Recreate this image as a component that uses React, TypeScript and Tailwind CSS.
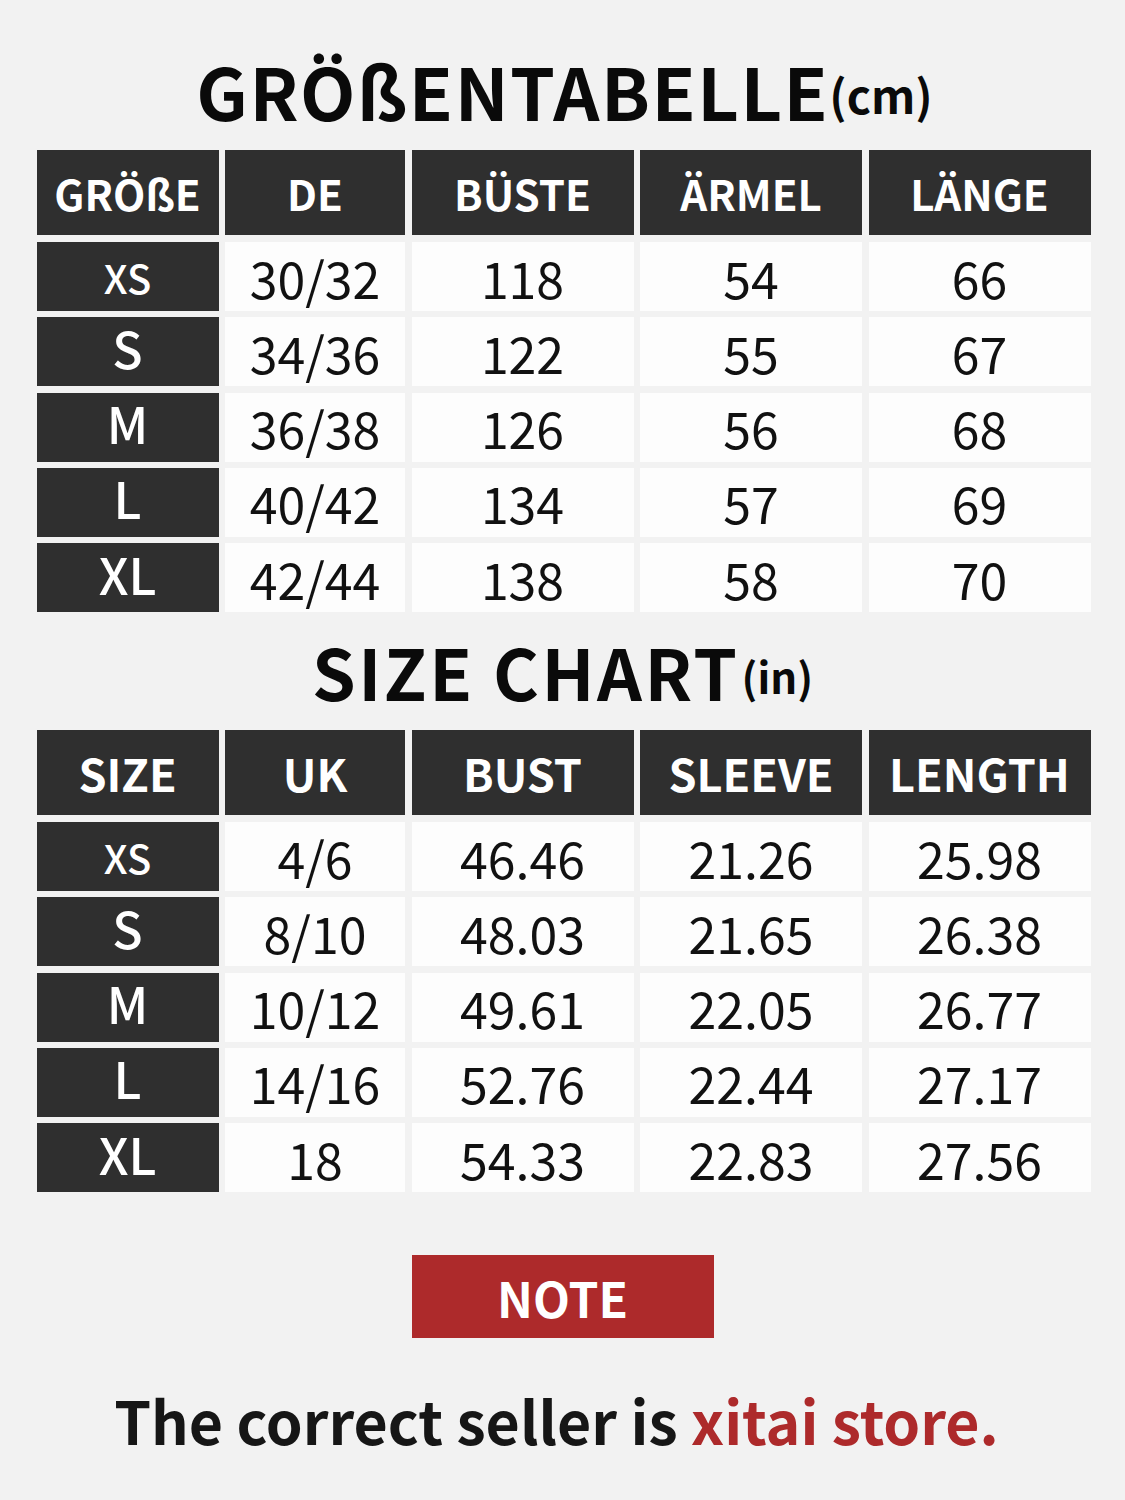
const font = { fontFamily: '"Noto Sans CJK SC", "Noto Sans", sans-serif' }

type Row = { size: string; cells: string[] }

const cmRows: Row[] = [
  { size: "XS", cells: ["30/32", "118", "54", "66"] },
  { size: "S", cells: ["34/36", "122", "55", "67"] },
  { size: "M", cells: ["36/38", "126", "56", "68"] },
  { size: "L", cells: ["40/42", "134", "57", "69"] },
  { size: "XL", cells: ["42/44", "138", "58", "70"] },
]

const inRows: Row[] = [
  { size: "XS", cells: ["4/6", "46.46", "21.26", "25.98"] },
  { size: "S", cells: ["8/10", "48.03", "21.65", "26.38"] },
  { size: "M", cells: ["10/12", "49.61", "22.05", "26.77"] },
  { size: "L", cells: ["14/16", "52.76", "22.44", "27.17"] },
  { size: "XL", cells: ["18", "54.33", "22.83", "27.56"] },
]

function SizeTable({ headers, rows, big }: { headers: string[]; rows: Row[]; big?: boolean }) {
  return (
    <div className="grid w-[1052px] grid-cols-[182px_180px_222px_222px_222px] gap-x-[6.5px] gap-y-[6.25px]">
      {headers.map((h) => (
        <div
          key={h}
          className={`mb-[0.75px] flex h-[85px] items-center justify-center bg-[#2f2f2f] font-bold text-white ${
            big ? "text-[45px]" : "text-[42px]"
          }`}
        >
          {h}
        </div>
      ))}
      {rows.map((r) => (
        <Cells key={r.size} row={r} />
      ))}
    </div>
  )
}

function Cells({ row }: { row: Row }) {
  const small = row.size === "XS"
  return (
    <>
      <div
        className={`flex h-[69px] items-center justify-center bg-[#2f2f2f] font-medium text-white ${
          small ? "text-[40px]" : "pb-[10px] text-[50px]"
        }`}
      >
        {row.size}
      </div>
      {row.cells.map((c, i) => (
        <div key={i} className="flex h-[69px] items-center justify-center bg-[#fdfdfd] text-[50px] text-[#111]">
          {c}
        </div>
      ))}
    </>
  )
}

export default function App() {
  return (
    <div style={font} className="flex h-[1500px] w-[1125px] flex-col items-center bg-[#f2f2f2] leading-none">
      <h1 className="mt-[48px] flex h-[78px] items-end pl-[4px] text-[72px] font-bold tracking-[1.5px] text-[#0a0a0a]">
        GRÖßENTABELLE
        <span className="mb-[9px] text-[46px] tracking-normal">(cm)</span>
      </h1>
      <div className="mt-[24px]">
        <SizeTable headers={["GRÖßE", "DE", "BÜSTE", "ÄRMEL", "LÄNGE"]} rows={cmRows} />
      </div>
      <h2 className="mt-[16px] flex h-[78px] items-end text-[70px] font-bold tracking-[2.5px] text-[#0a0a0a]">
        SIZE CHART
        <span className="mb-[9px] ml-[2px] text-[42px] tracking-normal">(in)</span>
      </h2>
      <div className="mt-[24px]">
        <SizeTable headers={["SIZE", "UK", "BUST", "SLEEVE", "LENGTH"]} rows={inRows} big />
      </div>
      <div className="mt-[63px] flex h-[83px] w-[302px] items-center justify-center bg-[#ad2a2b] text-[48px] font-bold text-white">
        NOTE
      </div>
      <p className="mt-[52px] pr-[12px] text-[59px] font-bold text-[#161616]">
        The correct seller is <span className="text-[#ad2a2b]">xitai store.</span>
      </p>
    </div>
  )
}
